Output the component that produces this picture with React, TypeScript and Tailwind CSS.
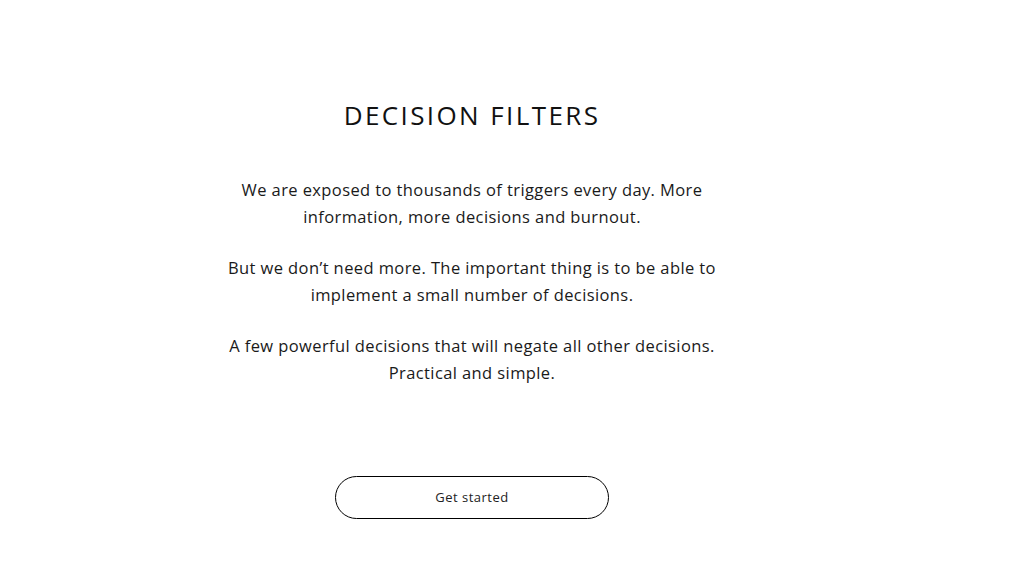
import React from 'react';

const paragraphs = [
  'We are exposed to thousands of triggers every day. More information, more decisions and burnout.',
  'But we don\u2019t need more. The important thing is to be able to implement a small number of decisions.',
  'A few powerful decisions that will negate all other decisions. Practical and simple.',
];

export default function App() {
  return (
    <div className="min-h-[573px] w-full bg-white text-[#1a1a1a]" style={{ fontFamily: '"Open Sans", "Noto Sans", sans-serif' }}>
      <div className="w-[944px] flex flex-col items-center pt-[99px]">
        <h1 className="text-[26px] leading-[32px] tracking-[2.4px] font-normal text-[#111]">DECISION FILTERS</h1>

        <div className="mt-[45px] w-[500px] flex flex-col gap-[24px] text-center text-[16.5px] leading-[27px] tracking-[0.4px]">
          {paragraphs.map((p, i) => (
            <p key={i}>{p}</p>
          ))}
        </div>

        <button className="mt-[90px] w-[274px] h-[43px] rounded-full border border-black text-[13px] tracking-[0.5px] text-[#222]">
          Get started
        </button>
      </div>
    </div>
  );
}
